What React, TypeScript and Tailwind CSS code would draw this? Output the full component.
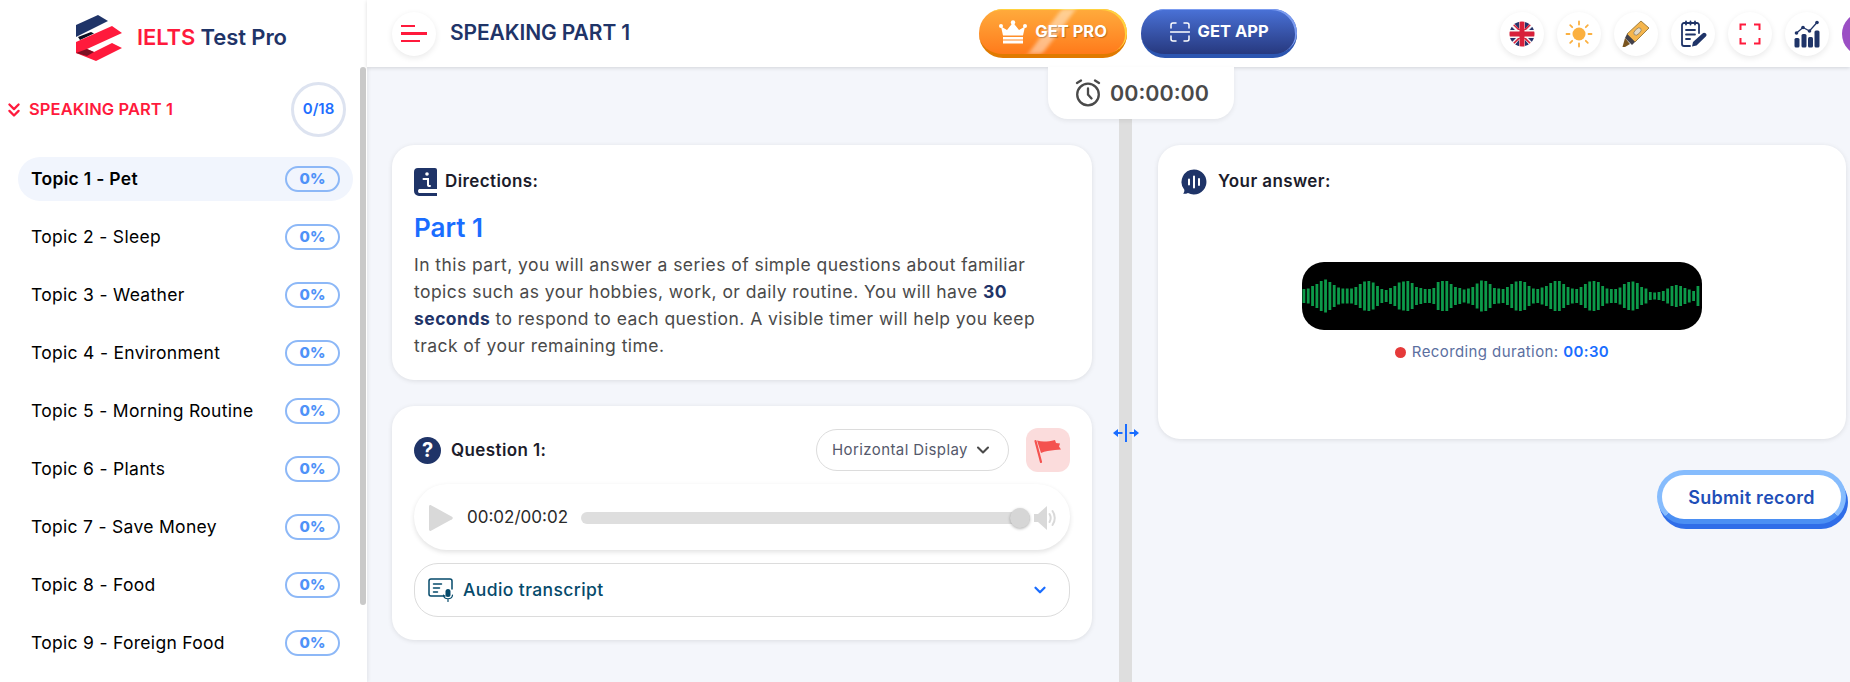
import { ChevronDown, ChevronsDown } from "lucide-react";

const topics = [
  "Topic 1 - Pet",
  "Topic 2 - Sleep",
  "Topic 3 - Weather",
  "Topic 4 - Environment",
  "Topic 5 - Morning Routine",
  "Topic 6 - Plants",
  "Topic 7 - Save Money",
  "Topic 8 - Food",
  "Topic 9 - Foreign Food",
];

// bar heights read off the recording strip, left to right
const waveBars = [
  14, 15, 20, 24, 30, 33, 28, 22, 17, 15, 15, 15, 18, 24, 29, 30, 27, 20, 14, 12, 16, 20, 27, 29, 30, 26, 18, 16, 14, 14, 16, 28, 30, 30, 24,
  18, 16, 13, 15, 18, 25, 31, 30, 24, 16, 15, 14, 18, 24, 29, 30, 28, 20, 15, 14, 17, 20, 26, 30, 30, 24, 18, 15, 14, 18, 24, 29, 30, 28, 20,
  15, 14, 14, 17, 24, 28, 29, 26, 18, 15, 8, 7, 8, 10, 15, 20, 22, 20, 16, 13, 10, 20,
];

function Logo() {
  return (
    <svg width="46" height="46" viewBox="0 0 46 46" className="shrink-0">
      <path d="M0 10 22 0l10 6L0 22z" fill="#1f3468" />
      <path d="M2 22l13-5 3 1.500L4 25z" fill="#0c1020" />
      <path d="M0 27l36-16 10 7-35 16 7 3 18-9 10 5-26 13-20-8z" fill="#ff1a3c" />
      <path d="M0 38l11-4 7 3-7 4z" fill="#7d1024" />
    </svg>
  );
}

function UkFlag() {
  return (
    <svg width="26" height="26" viewBox="0 0 26 26">
      <defs>
        <clipPath id="uk">
          <circle cx="13" cy="13" r="12.500" />
        </clipPath>
      </defs>
      <g clipPath="url(#uk)">
        <rect width="26" height="26" fill="#f5f5f5" />
        <path d="M3 0h7v8zM16 0h7l-7 8zM0 17h7l-7 7zM26 17h-7l7 7zM10 26v-7l-6 7zM16 26v-7l6 7zM0 3v6h6zM26 3v6h-6z" fill="#27336b" />
        <path d="M0 0l9 9h2.500L1.500 0zM26 26l-9-9h-2.500l9.500 9zM26 0l-9 9h-2.500L24 0zM0 26l9-9h2.500L2 26z" fill="#d8203a" />
        <rect x="10.500" width="5" height="26" fill="#d8203a" />
        <rect y="10.500" width="26" height="5" fill="#d8203a" />
      </g>
    </svg>
  );
}

function Sun() {
  return (
    <svg width="28" height="28" viewBox="0 0 28 28" stroke="#fbb040" strokeWidth="1.800" strokeLinecap="round">
      <circle cx="14" cy="14" r="6.500" fill="#fbb040" stroke="none" />
      <path d="M14 1.500v3M14 23.500v3M1.500 14h3M23.500 14h3M5.200 5.200l2 2M20.800 20.800l2 2M22.800 5.200l-2 2M7.200 20.800l-2 2" />
    </svg>
  );
}

function Marker() {
  return (
    <svg width="28" height="28" viewBox="0 0 28 28">
      <path d="M19 1l8 7-14 14-8-8z" fill="#f5b54c" stroke="#8a6a2a" strokeWidth="0.800" strokeLinejoin="round" />
      <ellipse cx="15.500" cy="11.500" rx="4.500" ry="2.500" transform="rotate(-45 15.500 11.500)" fill="#e0d8c8" stroke="#8a7a5a" strokeWidth="0.700" />
      <path d="M5 14l8 8-3 3-7-7z" fill="#44424a" />
      <path d="M3 18l5 6-5 3H0.500z" fill="#7a5520" />
    </svg>
  );
}

function Notes() {
  return (
    <svg width="28" height="28" viewBox="0 0 28 28" fill="none" stroke="#1f3468" strokeWidth="1.800" strokeLinecap="round" strokeLinejoin="round">
      <path d="M20 13V5a2 2 0 0 0-2-2H5a2 2 0 0 0-2 2v19a2 2 0 0 0 2 2h6" />
      <path d="M7 1.500v3M11.500 1.500v3M16 1.500v3M7 10h9M7 14.500h9M7 19h4" />
      <path d="M13 26.500l1-4.500 9.500-8.500a2.200 2.200 0 0 1 3.300 3L17.500 25.500z" fill="#1f3468" stroke="none" />
    </svg>
  );
}

function FullScreen() {
  return (
    <svg width="22" height="22" viewBox="0 0 22 22" fill="none" stroke="#ff1a3c" strokeWidth="2">
      <path d="M1.500 7V1.500H7M15 1.500h5.500V7M20.500 15v5.500H15M7 20.500H1.500V15" />
    </svg>
  );
}

function Chart() {
  return (
    <svg width="26" height="28" viewBox="0 0 26 28" fill="#1f3468">
      <rect x="0.500" y="18" width="5" height="9.500" rx="1.500" />
      <rect x="7.500" y="14" width="5" height="13.500" rx="1.500" />
      <rect x="14" y="17" width="5" height="10.500" rx="1.500" />
      <rect x="20.500" y="10.500" width="5" height="17" rx="1.500" />
      <path d="M2.500 13 9 7.500l6.500 3.500L23 2.500" fill="none" stroke="#1f3468" strokeWidth="1.300" />
      <circle cx="2.500" cy="13" r="1.800" />
      <circle cx="9" cy="7.500" r="1.800" />
      <circle cx="15.500" cy="11" r="1.800" />
      <circle cx="23" cy="2.500" r="1.800" />
    </svg>
  );
}

function Crown() {
  return (
    <svg width="28" height="24" viewBox="0 0 28 24" fill="#fff" className="relative">
      <path d="M4 15.500 2 6.500l6 3.500 6-7.500 6 7.500 6-3.500-2 9z" />
      <circle cx="2" cy="6" r="2" />
      <circle cx="14" cy="2.500" r="2.200" />
      <circle cx="26" cy="6" r="2" />
      <rect x="4" y="17" width="20" height="2.500" />
      <rect x="4" y="20.500" width="20" height="3" />
    </svg>
  );
}

function ScanIcon() {
  return (
    <svg width="20" height="20" viewBox="0 0 20 20" fill="none" stroke="#fff" strokeWidth="1.500" strokeLinecap="round">
      <path d="M1 6V3a2 2 0 0 1 2-2h3M14 1h3a2 2 0 0 1 2 2v3M19 14v3a2 2 0 0 1-2 2h-3M6 19H3a2 2 0 0 1-2-2v-3M0.500 10h19" />
    </svg>
  );
}

function Alarm() {
  return (
    <svg width="26" height="28" viewBox="0 0 26 28" fill="none" stroke="#4a4a4a" strokeWidth="2.300" strokeLinecap="round">
      <circle cx="13" cy="15.500" r="10.800" />
      <path d="M13 9.500v6l3.500 4M2 4l4-2.500M24 4l-4-2.500" />
    </svg>
  );
}

function BookInfo() {
  return (
    <svg width="23" height="28" viewBox="0 0 23 28">
      <path d="M4 0h17a2 2 0 0 1 2 2v19H5a2.500 2.500 0 0 0 0 4h18v3H5a5 5 0 0 1-5-5V4a4 4 0 0 1 4-4z" fill="#1f3468" />
      <circle cx="13" cy="6" r="1.800" fill="#fff" />
      <path d="M9.500 11h4.500v6c0 1 .8 1.200 2 1" fill="none" stroke="#fff" strokeWidth="2" strokeLinecap="round" />
    </svg>
  );
}

function TranscriptIcon() {
  return (
    <svg width="26" height="24" viewBox="0 0 26 24" fill="none" stroke="#054a6b" strokeWidth="1.500" strokeLinecap="round">
      <path d="M17 18H3a2 2 0 0 1-2-2V3a2 2 0 0 1 2-2h19a2 2 0 0 1 2 2v8" />
      <path d="M5.500 6h8M5.500 10h6M5.500 14h4" />
      <rect x="17.500" y="11" width="5" height="8" rx="2.500" fill="#054a6b" stroke="none" />
      <path d="M15.500 17c.5 5 8.500 5 9 0M20 21.500V23.500" strokeWidth="1.200" />
    </svg>
  );
}

function Flag() {
  return (
    <svg width="28" height="28" viewBox="0 0 28 28" fill="#f4524f">
      <path d="M1.500 5 7 26" stroke="#f4524f" strokeWidth="2.200" strokeLinecap="round" />
      <path d="M3 4.500c6 2 11 1 18-.5l1 3 4 .5-1 3 2 3-6 .5c-5 .5-10 1-14 3z" />
    </svg>
  );
}

function VoiceBubble() {
  return (
    <svg width="26" height="26" viewBox="0 0 26 26">
      <path d="M13 .5a12.500 12.500 0 1 1-6 23.500c-1.500.8-3.500 1-5 .8 1-1 1.500-2.500 1.300-4A12.500 12.500 0 0 1 13 .5z" fill="#1f3468" />
      <path d="M8 10.500v5M13 7.500v11M18 10v6" stroke="#fff" strokeWidth="2" strokeLinecap="round" />
    </svg>
  );
}

function Speaker() {
  return (
    <svg width="23" height="24" viewBox="0 0 23 24" fill="none" className="shrink-0">
      <path d="M0 8h4l9-8v24l-9-8H0z" fill="#d9d9d9" />
      <path d="M15.500 8c1.500 2.500 1.500 5.500 0 8M18.500 5c3 4 3 10 0 14" stroke="#d9d9d9" strokeWidth="2" strokeLinecap="round" />
    </svg>
  );
}

function Waveform() {
  return (
    <svg width="400" height="68" viewBox="0 0 400 68" className="rounded-[22px] bg-black">
      {waveBars.map((h, i) => (
        <rect key={i} x={0.5 + i * 4.33} y={34 - h / 2} width="2.800" height={h} fill="#0c9a49" />
      ))}
    </svg>
  );
}

function HeaderIcon({ children }: { children: React.ReactNode }) {
  return (
    <div className="flex h-11 w-11 shrink-0 items-center justify-center rounded-full bg-white shadow-[0_2px_6px_rgba(0,0,0,0.09)]">
      {children}
    </div>
  );
}

export default function App() {
  return (
    <div className="flex h-[682px] w-[1850px] overflow-hidden bg-[#f4f6fb] font-['Inter',sans-serif] text-black">
      <aside className="relative flex w-[367px] shrink-0 flex-col overflow-hidden bg-white shadow-[1px_0_4px_rgba(0,0,0,0.08)]">
        <div className="flex h-[67px] shrink-0 items-center gap-[15px] pt-2 pl-[76px]">
          <Logo />
          <p className="text-[22px] font-semibold tracking-[-0.1px] whitespace-nowrap text-[#1f3468]">
            <span className="text-[#ff1a3c]">IELTS</span> Test Pro
          </p>
        </div>
        <div className="mt-[15px] flex shrink-0 items-center justify-between pr-[21px] pl-[3px]">
          <div className="flex items-center gap-[4px] text-[#ff1a3c]">
            <ChevronsDown size={22} strokeWidth={2.500} />
            <span className="text-[16.500px] font-semibold tracking-[0.1px] whitespace-nowrap">SPEAKING PART 1</span>
          </div>
          <div className="flex h-[55px] w-[55px] items-center justify-center rounded-full border-[3px] border-[#dde3f0] text-[15px] font-semibold text-[#1f6fff]">
            0/18
          </div>
        </div>
        <ul className="mt-[20px] flex flex-col gap-[14px] pr-[14px] pl-[18px]">
          {topics.map((t, i) => (
            <li
              key={t}
              className={`flex h-11 shrink-0 items-center justify-between rounded-[22px] pr-[13px] pl-[13px] text-[17.500px] tracking-[0.3px] whitespace-nowrap ${i === 0 ? "bg-[#f1f5fd] font-semibold" : ""}`}
            >
              <span>{t}</span>
              <span className="flex h-[26px] w-[55px] items-center justify-center rounded-full border-2 border-[#8db8f7] text-[15px] font-extrabold tracking-normal text-[#4f92f8]">
                0%
              </span>
            </li>
          ))}
        </ul>
        <div className="absolute top-[67px] right-px h-[538px] w-[6px] rounded-full bg-[#c9c9c9]" />
      </aside>

      <div className="relative flex min-w-0 flex-1 flex-col">
        <header className="z-10 flex h-[67px] shrink-0 items-center bg-white pl-[25px] shadow-[0_1px_4px_rgba(0,0,0,0.14)]">
          <HeaderIcon>
            <div className="flex w-[26px] flex-col gap-[5px]">
              <span className="h-[2.500px] w-[14px] bg-[#ff1a3c]" />
              <span className="h-[2.500px] w-[26px] bg-[#ff1a3c]" />
              <span className="h-[2.500px] w-[19px] bg-[#ff1a3c]" />
            </div>
          </HeaderIcon>
          <h1 className="mb-[2px] ml-[14px] w-[183px] text-[21px] font-semibold tracking-[-0.1px] whitespace-nowrap text-[#1f3468]">SPEAKING PART 1</h1>

          <div className="ml-[349px] flex gap-[14px]">
            <button className="relative flex h-[49px] w-[148px] items-center justify-center gap-2 overflow-hidden rounded-[24px] border-b-[4px] border-[#e07a00] bg-gradient-to-b from-[#ffab3c] to-[#ff7a1a] shadow-[inset_-2px_1px_0_#ffd23f] [text-shadow:1px_1px_1px_rgba(0,0,0,0.25)]">
              <span className="absolute top-0 left-[66px] h-full w-[14px] skew-x-[-37deg] bg-white/45 blur-[2px]" />
              <Crown />
              <span className="relative text-[16.500px] font-bold text-white">GET PRO</span>
            </button>
            <button className="flex h-[49px] w-[156px] items-center justify-center gap-2 rounded-[24px] border-b-[4px] border-[#2c55b0] bg-gradient-to-b from-[#4a72d8] to-[#27397f] shadow-[inset_-2px_1px_0_#7c9cf0]">
              <ScanIcon />
              <span className="text-[16.500px] font-bold text-white">GET APP</span>
            </button>
          </div>

          <div className="ml-[203px] flex gap-[13px]">
            <HeaderIcon>
              <UkFlag />
            </HeaderIcon>
            <HeaderIcon>
              <Sun />
            </HeaderIcon>
            <HeaderIcon>
              <Marker />
            </HeaderIcon>
            <HeaderIcon>
              <Notes />
            </HeaderIcon>
            <HeaderIcon>
              <FullScreen />
            </HeaderIcon>
            <HeaderIcon>
              <Chart />
            </HeaderIcon>
            <div className="h-11 w-11 shrink-0 rounded-full bg-[#9b4fc4]" />
          </div>
        </header>

        {/* timer hangs off the header, over the splitter */}
        <div className="absolute top-[67px] left-[681px] z-10 flex h-[52px] w-[186px] items-center justify-center gap-[9px] rounded-b-[20px] bg-white pl-[2px] shadow-[0_2px_5px_rgba(0,0,0,0.07)]">
          <Alarm />
          <span className="text-[21.500px] font-semibold text-[#4a4a4a]">00:00:00</span>
        </div>

        <main className="flex min-h-0 flex-1">
          <section className="flex w-[752px] shrink-0 flex-col gap-[26px] pt-[78px] pr-[27px] pl-[25px]">
            <div className="h-[235px] rounded-[22px] bg-white px-[22px] pt-[23px] shadow-[0_1px_5px_rgba(0,0,0,0.1)]">
              <div className="flex items-center gap-2">
                <BookInfo />
                <span className="text-[17px] font-semibold tracking-[0.4px] text-[#1c1c2b]">Directions:</span>
              </div>
              <h2 className="mt-[14px] text-[26px] leading-[36px] font-semibold text-[#1a6dff]">Part 1</h2>
              <p className="mt-[5px] text-[17.500px] leading-[27px] tracking-[0.45px] text-[#4a4a4a]">
                In this part, you will answer a series of simple questions about familiar topics such as your hobbies, work, or daily routine. You will have{" "}
                <b className="font-bold text-[#1f3468]">30 seconds</b> to respond to each question. A visible timer will help you keep track of your remaining time.
              </p>
            </div>

            <div className="h-[234px] rounded-[22px] bg-white px-[22px] pt-[22px] shadow-[0_1px_5px_rgba(0,0,0,0.1)]">
              <div className="flex items-center">
                <span className="flex h-[27px] w-[27px] shrink-0 items-center justify-center rounded-full bg-[#1f3468] text-[20px] leading-none font-bold text-white">
                  ?
                </span>
                <span className="mt-[1px] ml-[10px] text-[17px] font-semibold tracking-[0.4px] text-[#1c1c2b]">Question 1:</span>
                <button className="ml-auto flex h-[42px] w-[193px] items-center justify-center gap-[5px] rounded-[21px] border border-[#dcdcdc] text-[15px] tracking-[0.4px] whitespace-nowrap text-[#55596b]">
                  Horizontal Display
                  <ChevronDown size={20} strokeWidth={2.500} className="text-[#4a4a4a]" />
                </button>
                <span className="ml-[17px] flex h-11 w-11 items-center justify-center rounded-[12px] bg-[#fbdcdc]">
                  <Flag />
                </span>
              </div>
              <div className="mt-[12px] flex h-[66px] items-center rounded-[33px] bg-white pt-[2px] pr-[13px] pl-[15px] shadow-[0_2px_5px_rgba(0,0,0,0.12)]">
                <svg width="24" height="26" viewBox="0 0 24 26" fill="#d9d9d9" className="shrink-0">
                  <path d="M0 1.500C0 .3 1-.3 2 .2l21 11.500c1 .6 1 2 0 2.600L2 25.800c-1 .5-2-.1-2-1.300z" />
                </svg>
                <span className="ml-[14px] text-[17px] whitespace-nowrap text-[#2a2a2a]">00:02/00:02</span>
                <div className="relative mr-[4px] ml-[13px] h-3 flex-1 rounded-full bg-[#dedede]">
                  <span className="absolute top-1/2 right-0 h-[20px] w-[20px] -translate-y-1/2 rounded-full bg-[#d6d6d6] shadow-[0_1px_3px_rgba(0,0,0,0.3)]" />
                </div>
                <Speaker />
              </div>
              <div className="mt-[13px] flex h-[54px] items-center rounded-[24px] border border-[#dcdcdc] pr-[20px] pl-[13px]">
                <TranscriptIcon />
                <span className="mt-[1px] ml-[9px] text-[17.500px] font-medium tracking-[0.4px] text-[#054a6b]">Audio transcript</span>
                <ChevronDown size={18} strokeWidth={3} className="ml-auto text-[#1a6dff]" />
              </div>
            </div>
          </section>

          <div className="relative w-[13px] shrink-0 bg-[#dedede]">
            <svg width="26" height="20" viewBox="0 0 26 20" fill="#1a6dff" className="absolute top-[356px] -left-[6px]">
              <path d="M12 1h2v18h-2z" />
              <path d="M0 10l5-4v3h4.500v2H5v3zM26 10l-5-4v3h-4.500v2H21v3z" />
            </svg>
          </div>

          <section className="flex min-w-0 flex-1 flex-col items-end pt-[78px] pr-[4px] pl-[26px]">
            <div className="flex h-[294px] w-full flex-col rounded-[22px] bg-white px-[23px] pt-[24px] shadow-[0_1px_5px_rgba(0,0,0,0.1)]">
              <div className="flex items-center gap-[11px]">
                <VoiceBubble />
                <span className="text-[17px] font-semibold tracking-[0.4px] text-[#1c1c2b]">Your answer:</span>
              </div>
              <div className="mt-[67px] flex flex-col items-center">
                <Waveform />
                <p className="mt-[11px] flex items-center gap-[6px] text-[15px] tracking-[0.4px] text-[#5b6f9f]">
                  <span className="h-[11px] w-[11px] rounded-full bg-[#e53a3a]" />
                  <span>
                    Recording duration: <b className="font-semibold text-[#1a6dff]">00:30</b>
                  </span>
                </p>
              </div>
            </div>
            <button className="mt-[31px] flex h-[54px] w-[189px] items-center justify-center rounded-[28px] border-[5px] border-[#86bcfd] border-b-[#4b8ff3] bg-white text-[18px] font-semibold tracking-[0.3px] text-[#1f4fb8] shadow-[2px_5px_0_#2f6de8]">
              Submit record
            </button>
          </section>
        </main>
      </div>
    </div>
  );
}
